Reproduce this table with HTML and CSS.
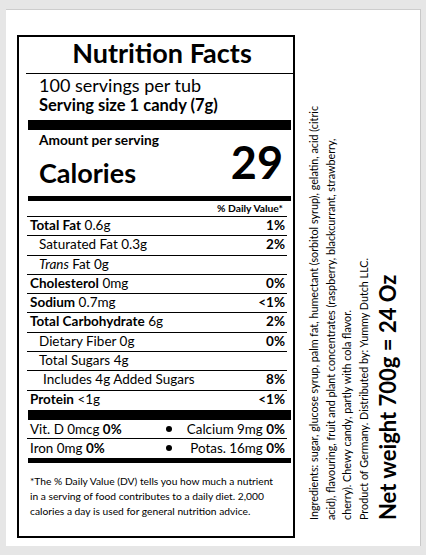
FILE: index.html
```html
<!DOCTYPE html>
<html>
	<head>
		<meta http-equiv="content-type" content="text/html;charset=UTF-8" />
		<link rel="stylesheet" href="styles.css">
	</head>

	<body>
		<div class="page">
			<div class="label">
				<div class="title">Nutrition Facts</div>
				<div class="servings">100 servings per tub</div>
				<div class="size">Serving size 1 candy (7g)</div>
				<div class="bar thick"></div>
				<div class="amount">Amount per serving</div>
				<div class="calories">
					<span class="calText">Calories</span>
					<span class="calNum">29</span>
				</div>
				<div class="bar medium"></div>
				<div class="dv">% Daily Value*</div>
				<div class="row"><span><b>Total Fat</b> 0.6g</span><b>1%</b></div>
				<div class="row sub"><span>Saturated Fat 0.3g</span><b>2%</b></div>
				<div class="row sub"><span><i>Trans</i> Fat 0g</span></div>
				<div class="row"><span><b>Cholesterol</b> 0mg</span><b>0%</b></div>
				<div class="row"><span><b>Sodium</b> 0.7mg</span><b>&lt;1%</b></div>
				<div class="row"><span><b>Total Carbohydrate</b> 6g</span><b>2%</b></div>
				<div class="row sub"><span>Dietary Fiber 0g</span><b>0%</b></div>
				<div class="row sub"><span>Total Sugars 4g</span></div>
				<div class="row subSub"><span>Includes 4g Added Sugars</span><b>8%</b></div>
				<div class="row last"><span><b>Protein</b> &lt;1g</span><b>&lt;1%</b></div>
				<div class="bar thick"></div>
				<div class="vit">
					<span>Vit. D 0mcg <b>0%</b></span>
					<span class="dot"></span>
					<span class="vitRight">Calcium 9mg <b>0%</b></span>
				</div>
				<div class="vit last">
					<span>Iron 0mg <b>0%</b></span>
					<span class="dot"></span>
					<span class="vitRight">Potas. 16mg <b>0%</b></span>
				</div>
				<div class="bar medium"></div>
				<div class="note">
					*The % Daily Value (DV) tells you how much a nutrient<br>
					in a serving of food contributes to a daily diet. 2,000<br>
					calories a day is used for general nutrition advice.
				</div>
			</div>
			<div class="side">
				<div class="ingredients">
					Ingredients: sugar, glucose syrup, palm fat, humectant (sorbitol syrup), gelatin, acid (citric<br>
					acid), flavouring, fruit and plant concentrates (raspberry, blackcurrant, strawberry,<br>
					cherry). Chewy candy, partly with cola flavor.<br>
					Product of Germany. Distributed by: Yummy Dutch LLC.
				</div>
				<div class="weight">Net weight 700g = 24 Oz</div>
			</div>
		</div>
	</body>
</html>
```

FILE: styles.css
```css
body{
	margin: 0;
	padding: 9px 0 0 6px;
	background-color: #e6e6e6;
	font-family: Lato, "Liberation Sans", sans-serif;
	color: #000;
}
.page{
	width: 415px;
	height: 537px;
	box-sizing: border-box;
	background-color: #fff;
	border-top: solid 1px #cdcdcd;
	border-right: solid 1px #c8c8c8;
	padding: 25px 0 0 11px;
	display: flex;
	flex-direction: row;
	align-items: flex-start;
	gap: 11px;
}
.label{
	width: 278px;
	height: 503px;
	box-sizing: border-box;
	border: solid 2px #000;
	padding: 0 6px 0 8px;
	display: flex;
	flex-direction: column;
}
.title{
	font-size: 27px;
	font-weight: bold;
	line-height: 32px;
	text-align: center;
	padding: 0 0 4px 5px;
	margin: 0 -6px 0 -1px;
	border-bottom: solid 1px #000;
}
.servings{
	font-size: 18px;
	line-height: 21.6px;
	padding: 0.7px 0 0 12px;
}
.size{
	font-size: 16.5px;
	font-weight: bold;
	line-height: 19.8px;
	padding-left: 12px;
}
.bar{
	background-color: #000;
	margin: 0 -4px 0 1px;
}
.bar.thick{
	height: 10px;
}
.size + .bar{
	margin-top: 3.9px;
}
.bar.medium{
	height: 5px;
}
.amount{
	font-size: 13.7px;
	font-weight: bold;
	line-height: 16px;
	padding: 2px 0 0 12px;
}
.calories{
	height: 48px;
	display: flex;
	justify-content: space-between;
	align-items: flex-start;
	padding: 0 4px 0 12px;
	font-weight: bold;
}
.calText{
	font-size: 27px;
	line-height: 28px;
	margin-top: 11.5px;
}
.calNum{
	font-size: 45px;
	line-height: 32px;
	margin-top: -2px;
}
.dv{
	font-size: 10.3px;
	font-weight: bold;
	line-height: 15px;
	text-align: right;
	padding-right: 4px;
	border-bottom: solid 1px #000;
}
.row{
	height: 19.3px;
	box-sizing: border-box;
	font-size: 13.5px;
	line-height: 17.3px;
	display: flex;
	justify-content: space-between;
	padding: 0 2px 0 3px;
	border-bottom: solid 1px #000;
}
.row.sub{
	padding-left: 12px;
}
.row.subSub{
	padding-left: 16px;
}
.row.last{
	border-bottom: none;
}
.vit{
	height: 19px;
	box-sizing: border-box;
	font-size: 13.4px;
	line-height: 19px;
	display: grid;
	grid-template-columns: 132px 14px 1fr;
	align-items: center;
	padding: 0 2px 0 3px;
	border-bottom: solid 1px #000;
}
.vit.last{
	border-bottom: none;
}
.dot{
	justify-self: center;
	width: 6px;
	height: 6px;
	border-radius: 50%;
	background-color: #000;
}
.vitRight{
	justify-self: end;
}
.note{
	font-size: 10.25px;
	line-height: 15px;
	padding: 11px 0 0 3px;
	white-space: nowrap;
}
.side{
	height: 485px;
	writing-mode: vertical-rl;
	transform: rotate(180deg);
	white-space: nowrap;
}
.ingredients{
	font-size: 10.75px;
	line-height: 16.6px;
}
.weight{
	font-size: 22px;
	font-weight: bold;
	line-height: 26px;
	margin-block-start: 3px;
}
```
